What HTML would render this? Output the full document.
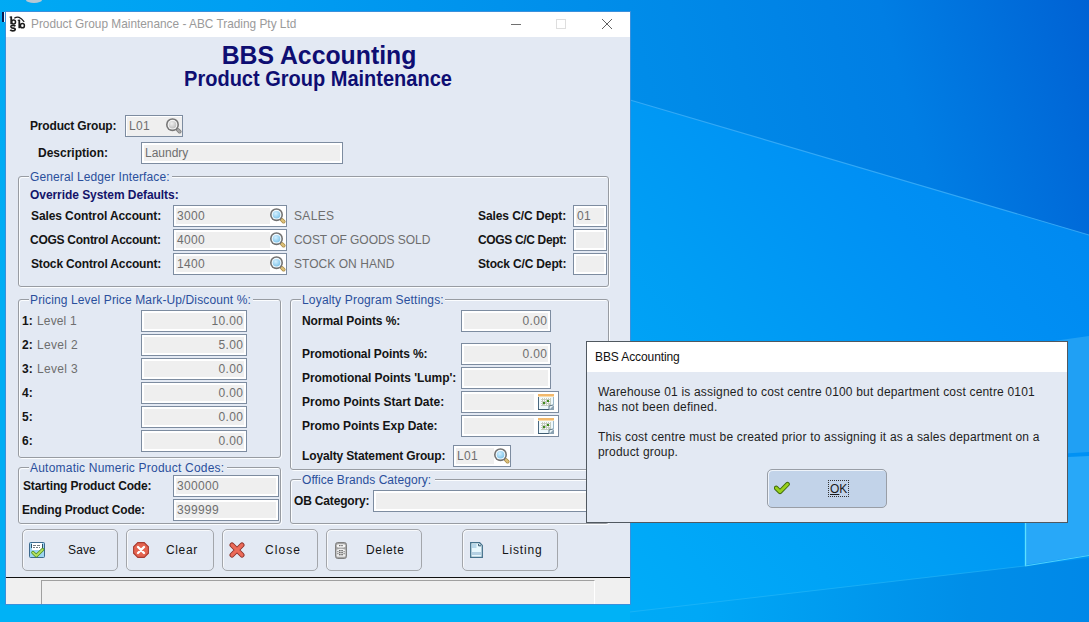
<!DOCTYPE html>
<html><head><meta charset="utf-8">
<style>
*{box-sizing:border-box}
html,body{margin:0;padding:0}
body{width:1089px;height:622px;overflow:hidden;position:relative;font-family:"Liberation Sans",sans-serif;font-size:12px;background:#0b8fe8}
.a{position:absolute}
.t{position:absolute;white-space:nowrap;line-height:14px;height:14px}
.lb{font-weight:bold;color:#141414}
.nv{font-weight:bold;color:#14146a}
.lg{color:#2a4f9c}
.gv{color:#6e6e6e}
.nm{letter-spacing:0.33px}
.fld{position:absolute;border:1px solid #7d8ca0;background:#fff}
.fld i{position:absolute;background:#efefef}
.btn{position:absolute;border:1px solid #a3a6ab;border-radius:5px;box-shadow:inset 1px 1px 0 #f7f9fc}
.bt{color:#141414}
</style></head><body>
<svg width="0" height="0" style="position:absolute">
<defs>
 <radialGradient id="glass" cx="0.4" cy="0.35" r="0.7"><stop offset="0" stop-color="#d4f0ff"/><stop offset="1" stop-color="#7ec4ea"/></radialGradient>
 <radialGradient id="glassg" cx="0.4" cy="0.35" r="0.7"><stop offset="0" stop-color="#f0f0f0"/><stop offset="1" stop-color="#bcbcbc"/></radialGradient>
 <symbol id="mag" viewBox="0 0 16 16">
  <path d="M12 12 L13.6 13.6" stroke="#a88a48" stroke-width="3.8" stroke-linecap="round"/>
  <path d="M12 12 L13.6 13.6" stroke="#dcc078" stroke-width="2.4" stroke-linecap="round"/>
  <circle cx="6.5" cy="6.7" r="6.5" fill="#727272"/>
  <circle cx="6.5" cy="6.7" r="4.9" fill="#f4fbff"/>
  <circle cx="6.5" cy="6.7" r="3.8" fill="url(#glass)"/>
 </symbol>
 <symbol id="magg" viewBox="0 0 16 16">
  <path d="M12 12 L13.6 13.6" stroke="#7c7c7c" stroke-width="3.8" stroke-linecap="round"/>
  <path d="M12 12 L13.6 13.6" stroke="#a8a8a8" stroke-width="2.4" stroke-linecap="round"/>
  <circle cx="6.5" cy="6.7" r="6.5" fill="#767676"/>
  <circle cx="6.5" cy="6.7" r="4.9" fill="#f6f6f6"/>
  <circle cx="6.5" cy="6.7" r="3.8" fill="url(#glassg)"/>
 </symbol>
 <symbol id="cal" viewBox="0 0 16 16">
  <rect x="0" y="0" width="16" height="16" fill="#eef8fc"/>
  <rect x="0" y="0" width="16" height="2" fill="#f2b86c"/>
  <rect x="0" y="2" width="16" height="1" fill="#f8dcae"/>
  <rect x="0" y="3" width="1" height="13" fill="#4a6880"/>
  <rect x="0" y="15" width="11" height="1" fill="#3e5c72"/>
  <rect x="15" y="3" width="1" height="8" fill="#9ab8c8"/>
  <rect x="3" y="4" width="10" height="8" fill="#c4ccc0"/>
  <g fill="#ffffff">
   <rect x="3" y="4" width="1" height="1"/><rect x="5" y="4" width="1" height="1"/><rect x="7" y="4" width="1" height="1"/><rect x="9" y="4" width="1" height="1"/><rect x="11" y="4" width="1" height="1"/>
   <rect x="3" y="6" width="1" height="1"/><rect x="5" y="6" width="1" height="1"/><rect x="7" y="6" width="1" height="1"/><rect x="11" y="6" width="1" height="1"/>
   <rect x="3" y="8" width="1" height="1"/><rect x="9" y="8" width="1" height="1"/><rect x="11" y="8" width="1" height="1"/>
   <rect x="3" y="10" width="1" height="1"/><rect x="7" y="10" width="1" height="1"/><rect x="9" y="10" width="1" height="1"/>
  </g>
  <rect x="5" y="8" width="2" height="2" fill="#3f8c1c"/><rect x="9" y="6" width="2" height="2" fill="#3f8c1c"/>
  <path d="M11 16 L16 11 L16 16 Z" fill="#8aa2b2"/>
  <path d="M11 16 L11 12 L15 11" fill="none" stroke="#5e7888" stroke-width="1"/>
 </symbol>
 <symbol id="save" viewBox="0 0 16 16">
  <rect x="0.5" y="0.5" width="15" height="15" rx="1" fill="#9ed6f2" stroke="#3d6a8e"/>
  <rect x="3" y="1" width="10" height="7" fill="#ffffff"/>
  <rect x="2" y="2" width="1" height="4" fill="#2e4e66"/><rect x="13" y="2" width="1" height="4" fill="#2e4e66"/>
  <g fill="#707a80"><rect x="4" y="3" width="3" height="1"/><rect x="8" y="3" width="3" height="1"/><rect x="4" y="5" width="2" height="1"/><rect x="7" y="5" width="2" height="1"/><rect x="10" y="5" width="1" height="1"/></g>
  <path d="M4 10.6 L7.3 13.8 L13.6 7.6" fill="none" stroke="#4a8c18" stroke-width="3.4" stroke-linejoin="round" stroke-linecap="round"/>
  <path d="M4 10.6 L7.3 13.8 L13.6 7.6" fill="none" stroke="#b4e060" stroke-width="2.0" stroke-linejoin="round" stroke-linecap="round"/>
 </symbol>
 <symbol id="clear" viewBox="0 0 16 16">
  <path d="M4.8 0.6 H11.2 L15.4 4.8 V11.2 L11.2 15.4 H4.8 L0.6 11.2 V4.8 Z" fill="#e46450" stroke="#a83c32" stroke-width="1.1"/>
  <path d="M5 5 L11 11 M11 5 L5 11" stroke="#fff" stroke-width="2.4" stroke-linecap="round"/>
 </symbol>
 <symbol id="close" viewBox="0 0 16 16">
  <path d="M3 3 L13 13 M13 3 L3 13" stroke="#8a3028" stroke-width="5" stroke-linecap="round"/>
  <path d="M3 3 L13 13 M13 3 L3 13" stroke="#ec6a58" stroke-width="3.2" stroke-linecap="round"/>
 </symbol>
 <symbol id="del" viewBox="0 0 12 17">
  <rect x="0.5" y="0.5" width="11" height="16" rx="2.2" fill="#a4a4a4" stroke="#808080"/>
  <rect x="1.6" y="2.2" width="8.8" height="3.2" rx="1.6" fill="#f6f6f6"/>
  <path d="M1.6 7.8 Q6 5.6 10.4 7.8 V13.6 Q10.4 14.8 9.2 14.8 H2.8 Q1.6 14.8 1.6 13.6 Z" fill="#eeeeee"/>
  <g fill="#4a4a4a"><rect x="4.2" y="3" width="1.2" height="1.2"/><rect x="6.4" y="3" width="1.2" height="1.2"/>
  <rect x="4.2" y="8" width="1.3" height="1.3"/><rect x="6.4" y="8" width="1.3" height="1.3"/>
  <rect x="4.2" y="10" width="1.3" height="1.3"/><rect x="6.4" y="10" width="1.3" height="1.3"/>
  <rect x="4.2" y="12" width="1.3" height="1.3"/><rect x="6.4" y="12" width="1.3" height="1.3"/>
  <rect x="2.4" y="9.2" width="1" height="1"/><rect x="8.6" y="9.2" width="1" height="1"/><rect x="2.4" y="11.2" width="1" height="1"/><rect x="8.6" y="11.2" width="1" height="1"/></g>
 </symbol>
 <symbol id="list" viewBox="0 0 13 16">
  <path d="M0.7 0.7 H9.6 L12.3 3.4 V15.3 H0.7 Z" fill="#e8f8fd" stroke="#46728c" stroke-width="1.3"/>
  <rect x="2" y="2" width="4.5" height="4" fill="#b8d8ea"/>
  <rect x="2" y="10" width="9" height="3" fill="#b4d0e2"/>
  <path d="M8.6 2 V3.8 H11" fill="none" stroke="#2e5068" stroke-width="1"/>
 </symbol>
 <symbol id="ok" viewBox="0 0 16 14">
  <path d="M2.2 7 L6 10.8 L13.5 3.2" fill="none" stroke="#3e6a0c" stroke-width="4.6" stroke-linejoin="round" stroke-linecap="round"/>
  <path d="M2.2 7 L6 10.8 L13.5 3.2" fill="none" stroke="#98d01c" stroke-width="2.8" stroke-linejoin="round" stroke-linecap="round"/>
 </symbol>
</defs></svg>

<svg class="a" style="left:0;top:0" width="1089" height="622">
  <defs>
    <linearGradient id="bgA" gradientUnits="userSpaceOnUse" x1="0" y1="300" x2="1089" y2="0">
      <stop offset="0" stop-color="#00aef4"/><stop offset="0.28" stop-color="#009ef2"/><stop offset="0.64" stop-color="#008ae8"/><stop offset="0.82" stop-color="#007ee4"/><stop offset="1" stop-color="#0062d4"/>
    </linearGradient>
    <linearGradient id="bgB" gradientUnits="userSpaceOnUse" x1="630" y1="600" x2="1089" y2="200">
      <stop offset="0" stop-color="#00acf8"/><stop offset="0.12" stop-color="#00a8f8"/><stop offset="0.41" stop-color="#009ef4"/><stop offset="0.74" stop-color="#0090f4"/><stop offset="1" stop-color="#0088f0"/>
    </linearGradient>
    <linearGradient id="bgC" gradientUnits="userSpaceOnUse" x1="630" y1="0" x2="1089" y2="0">
      <stop offset="0" stop-color="#00aaf6"/><stop offset="0.15" stop-color="#00a8f6"/><stop offset="0.74" stop-color="#008ee8"/><stop offset="1" stop-color="#0088e8"/>
    </linearGradient>
  </defs>
  <rect x="0" y="0" width="1089" height="622" fill="url(#bgA)"/>
  <polygon points="630,100 1089,235 1089,622 630,622" fill="url(#bgB)"/>
  <line x1="630" y1="100" x2="1089" y2="235" stroke="#40b0f8" stroke-width="1.1" opacity="0.8"/>
  <rect x="0" y="604" width="630" height="18" fill="#00b2f6"/>
  <polygon points="630,612 1025,566 1089,558 1089,622 630,622" fill="url(#bgC)"/>
  <line x1="630" y1="612" x2="1025" y2="566" stroke="#30bcf8" stroke-width="1" opacity="0.5"/>
  <polygon points="1025,345 1089,336 1089,452 1025,456" fill="#20a0f4"/>
  <polygon points="1025,459 1089,456 1089,555 1025,565" fill="#28a8f8"/>
  <line x1="1025.5" y1="459" x2="1025.5" y2="566" stroke="#5ce0ff" stroke-width="1.3"/>
  <line x1="1025" y1="566" x2="1089" y2="555.5" stroke="#50d0fc" stroke-width="1.2"/>
  <ellipse cx="34" cy="0" rx="8" ry="3" fill="#b8c8d4"/>
</svg>
<div class="a" style="left:2px;top:12px;width:2px;height:10px;background:#0a1a50"></div><div class="a" style="left:4px;top:12px;width:1px;height:10px;background:#e8f4ff"></div>

<div class="a" style="left:5px;top:11px;width:626px;height:594px;background:#3a90dc"></div>
<div class="a" style="left:6px;top:12px;width:624px;height:592px;background:#e3e9f3"></div>
<div class="a" style="left:6px;top:12px;width:624px;height:25px;background:#fff"></div>
<div class="t " style="left:31px;top:17px;color:#9a9a9a;font-size:11.85px">Product Group Maintenance - ABC Trading Pty Ltd</div>
<svg class="a" style="left:6px;top:12px" width="22" height="22" viewBox="6 12 22 22">
 <g fill="none" stroke="#1c1c1c">
  <path d="M11.2 16.6 V24.2" stroke-width="1.8"/>
  <path d="M9.6 17.1 H12" stroke-width="1.1"/>
  <ellipse cx="13.6" cy="22" rx="1.9" ry="2.0" stroke-width="1.5"/>
  <path d="M15.4 26.2 Q14.6 25.3 12.8 25.4 Q10.6 25.6 11 27 Q11.4 28 13 28.1 Q15.3 28.4 15.2 29.6 Q15 30.9 12.8 30.9 Q10.9 30.8 10.3 29.8" stroke-width="1.7"/>
  <path d="M19.3 19.8 V28.2" stroke-width="1.8"/>
  <path d="M17.7 20.3 H20" stroke-width="1.1"/>
  <ellipse cx="22.4" cy="25.7" rx="2.0" ry="2.1" stroke-width="1.5"/>
  <path d="M14.3 18.3 Q19 14.6 24.2 21.8" stroke-width="1.2"/>
 </g>
</svg>
<div class="a" style="left:511px;top:24px;width:10px;height:1px;background:#707070"></div>
<div class="a" style="left:556px;top:19px;width:10px;height:10px;border:1px solid #dedede"></div>
<svg class="a" style="left:601px;top:18px" width="12" height="12"><path d="M1 1L11 11M11 1L1 11" stroke="#606060" stroke-width="1"/></svg>
<div class="t" style="left:7px;width:624px;text-align:center;top:41px;font-size:24.8px;line-height:28px;height:28px;font-weight:bold;color:#0e0e72;transform:scaleY(1.065);transform-origin:50% 5px">BBS Accounting</div>
<div class="t" style="left:6px;width:624px;text-align:center;top:67px;font-size:20px;line-height:22px;height:22px;font-weight:bold;color:#0e0e72;transform:scaleY(1.07);transform-origin:50% 4px">Product Group Maintenance</div>
<div class="t lb" style="left:30px;top:119px;letter-spacing:-0.169px;">Product Group:</div>
<div class="fld" style="left:125px;top:115px;width:58px;height:22px"><i style="left:1px;top:1px;right:0;bottom:0"></i></div>
<svg class="a" style="left:166px;top:118px" width="16" height="16" viewBox="0 0 16 16"><use href="#magg"/></svg>
<div class="t gv nm" style="left:129px;top:119px;">L01</div>
<div class="t lb" style="left:38px;top:146px;letter-spacing:0.0px;">Description:</div>
<div class="fld" style="left:141px;top:142px;width:202px;height:22px;"><i style="left:2px;top:2px;right:2px;bottom:2px"></i></div>
<div class="t gv" style="left:145px;top:146px;">Laundry</div>
<div class="a" style="left:19px;top:177px;width:591px;height:111px;border:1px solid #fbfdff;border-radius:3px"></div>
<div class="a" style="left:18px;top:176px;width:591px;height:111px;border:1px solid #989ca2;border-radius:3px"></div>
<div class="a" style="left:29px;top:174px;width:143px;height:5px;background:#e3e9f3"></div>
<div class="t lg" style="left:30px;top:170px;letter-spacing:0.117px;">General Ledger Interface:</div>
<div class="t nv" style="left:30px;top:188px;letter-spacing:-0.058px;">Override System Defaults:</div>
<div class="t lb" style="left:31px;top:209px;letter-spacing:-0.095px;">Sales Control Account:</div>
<div class="t lb" style="left:30px;top:233px;letter-spacing:-0.265px;">COGS Control Account:</div>
<div class="t lb" style="left:31px;top:257px;letter-spacing:-0.157px;">Stock Control Account:</div>
<div class="fld" style="left:173px;top:205px;width:114px;height:22px;"><i style="left:2px;top:2px;right:16px;bottom:2px"></i></div>
<svg class="a" style="left:270px;top:208px" width="16" height="16" viewBox="0 0 16 16"><use href="#mag"/></svg>
<div class="t gv nm" style="left:177px;top:209px;">3000</div>
<div class="t gv" style="left:294px;top:209px;letter-spacing:0.35px;">SALES</div>
<div class="fld" style="left:173px;top:229px;width:114px;height:22px;"><i style="left:2px;top:2px;right:16px;bottom:2px"></i></div>
<svg class="a" style="left:270px;top:232px" width="16" height="16" viewBox="0 0 16 16"><use href="#mag"/></svg>
<div class="t gv nm" style="left:177px;top:233px;">4000</div>
<div class="t gv" style="left:294px;top:233px;letter-spacing:-0.047px;">COST OF GOODS SOLD</div>
<div class="fld" style="left:173px;top:253px;width:114px;height:22px;"><i style="left:2px;top:2px;right:16px;bottom:2px"></i></div>
<svg class="a" style="left:270px;top:256px" width="16" height="16" viewBox="0 0 16 16"><use href="#mag"/></svg>
<div class="t gv nm" style="left:177px;top:257px;">1400</div>
<div class="t gv" style="left:294px;top:257px;letter-spacing:0.042px;">STOCK ON HAND</div>
<div class="t lb" style="left:478px;top:209px;letter-spacing:-0.079px;">Sales C/C Dept:</div>
<div class="t lb" style="left:478px;top:233px;letter-spacing:-0.346px;">COGS C/C Dept:</div>
<div class="t lb" style="left:478px;top:257px;letter-spacing:-0.164px;">Stock C/C Dept:</div>
<div class="fld" style="left:573px;top:205px;width:34px;height:22px;"><i style="left:2px;top:2px;right:2px;bottom:2px"></i></div>
<div class="fld" style="left:573px;top:229px;width:34px;height:22px;"><i style="left:2px;top:2px;right:2px;bottom:2px"></i></div>
<div class="fld" style="left:573px;top:253px;width:34px;height:22px;"><i style="left:2px;top:2px;right:2px;bottom:2px"></i></div>
<div class="t gv nm" style="left:577px;top:209px;">01</div>
<div class="a" style="left:19px;top:300px;width:263px;height:159px;border:1px solid #fbfdff;border-radius:3px"></div>
<div class="a" style="left:18px;top:299px;width:263px;height:159px;border:1px solid #989ca2;border-radius:3px"></div>
<div class="a" style="left:29px;top:297px;width:224px;height:5px;background:#e3e9f3"></div>
<div class="t lg" style="left:30px;top:293px;letter-spacing:0.126px;">Pricing Level Price Mark-Up/Discount %:</div>
<div class="t lb" style="left:22px;top:314px;">1:</div>
<div class="t gv" style="left:37px;top:314px;letter-spacing:0.367px;letter-spacing:0.15px">Level 1</div>
<div class="fld" style="left:141px;top:310px;width:106px;height:22px;"><i style="left:2px;top:2px;right:2px;bottom:2px"></i></div>
<div class="t gv nm" style="left:141px;width:102.3px;text-align:right;top:314px">10.00</div>
<div class="t lb" style="left:22px;top:338px;">2:</div>
<div class="t gv" style="left:37px;top:338px;letter-spacing:0.33px">Level 2</div>
<div class="fld" style="left:141px;top:334px;width:106px;height:22px;"><i style="left:2px;top:2px;right:2px;bottom:2px"></i></div>
<div class="t gv nm" style="left:141px;width:102.3px;text-align:right;top:338px">5.00</div>
<div class="t lb" style="left:22px;top:362px;">3:</div>
<div class="t gv" style="left:37px;top:362px;letter-spacing:0.33px">Level 3</div>
<div class="fld" style="left:141px;top:358px;width:106px;height:22px;"><i style="left:2px;top:2px;right:2px;bottom:2px"></i></div>
<div class="t gv nm" style="left:141px;width:102.3px;text-align:right;top:362px">0.00</div>
<div class="t lb" style="left:22px;top:386px;">4:</div>
<div class="fld" style="left:141px;top:382px;width:106px;height:22px;"><i style="left:2px;top:2px;right:2px;bottom:2px"></i></div>
<div class="t gv nm" style="left:141px;width:102.3px;text-align:right;top:386px">0.00</div>
<div class="t lb" style="left:22px;top:410px;">5:</div>
<div class="fld" style="left:141px;top:406px;width:106px;height:22px;"><i style="left:2px;top:2px;right:2px;bottom:2px"></i></div>
<div class="t gv nm" style="left:141px;width:102.3px;text-align:right;top:410px">0.00</div>
<div class="t lb" style="left:22px;top:434px;">6:</div>
<div class="fld" style="left:141px;top:430px;width:106px;height:22px;"><i style="left:2px;top:2px;right:2px;bottom:2px"></i></div>
<div class="t gv nm" style="left:141px;width:102.3px;text-align:right;top:434px">0.00</div>
<div class="a" style="left:19px;top:468px;width:263px;height:57px;border:1px solid #fbfdff;border-radius:3px"></div>
<div class="a" style="left:18px;top:467px;width:263px;height:57px;border:1px solid #989ca2;border-radius:3px"></div>
<div class="a" style="left:29px;top:465px;width:198px;height:5px;background:#e3e9f3"></div>
<div class="t lg" style="left:30px;top:461px;letter-spacing:0.216px;">Automatic Numeric Product Codes:</div>
<div class="t lb" style="left:23px;top:479px;letter-spacing:-0.09px;letter-spacing:-0.13px">Starting Product Code:</div>
<div class="t lb" style="left:22px;top:503px;letter-spacing:-0.189px;">Ending Product Code:</div>
<div class="fld" style="left:173px;top:475px;width:106px;height:22px;"><i style="left:2px;top:2px;right:2px;bottom:2px"></i></div>
<div class="fld" style="left:173px;top:499px;width:106px;height:22px;"><i style="left:2px;top:2px;right:2px;bottom:2px"></i></div>
<div class="t gv nm" style="left:177px;top:479px;">300000</div>
<div class="t gv nm" style="left:177px;top:503px;">399999</div>
<div class="a" style="left:291px;top:300px;width:319px;height:171px;border:1px solid #fbfdff;border-radius:3px"></div>
<div class="a" style="left:290px;top:299px;width:319px;height:171px;border:1px solid #989ca2;border-radius:3px"></div>
<div class="a" style="left:301px;top:297px;width:144px;height:5px;background:#e3e9f3"></div>
<div class="t lg" style="left:302px;top:293px;letter-spacing:0.179px;">Loyalty Program Settings:</div>
<div class="t lb" style="left:302px;top:314px;letter-spacing:-0.067px;">Normal Points %:</div>
<div class="t lb" style="left:302px;top:347px;letter-spacing:-0.125px;">Promotional Points %:</div>
<div class="t lb" style="left:302px;top:371px;letter-spacing:-0.06px;">Promotional Points 'Lump':</div>
<div class="t lb" style="left:302px;top:395px;letter-spacing:0.009px;">Promo Points Start Date:</div>
<div class="t lb" style="left:302px;top:419px;letter-spacing:-0.057px;">Promo Points Exp Date:</div>
<div class="t lb" style="left:302px;top:449px;letter-spacing:-0.139px;">Loyalty Statement Group:</div>
<div class="fld" style="left:461px;top:310px;width:90px;height:22px;"><i style="left:2px;top:2px;right:2px;bottom:2px"></i></div>
<div class="fld" style="left:461px;top:343px;width:90px;height:22px;"><i style="left:2px;top:2px;right:2px;bottom:2px"></i></div>
<div class="fld" style="left:461px;top:367px;width:90px;height:22px;"><i style="left:2px;top:2px;right:2px;bottom:2px"></i></div>
<div class="fld" style="left:461px;top:391px;width:98px;height:22px;"><i style="left:2px;top:2px;right:24px;bottom:2px"></i></div>
<div class="fld" style="left:461px;top:415px;width:98px;height:22px;"><i style="left:2px;top:2px;right:24px;bottom:2px"></i></div>
<svg class="a" style="left:538px;top:394px" width="16" height="16" viewBox="0 0 16 16"><use href="#cal"/></svg>
<svg class="a" style="left:538px;top:418px" width="16" height="16" viewBox="0 0 16 16"><use href="#cal"/></svg>
<div class="fld" style="left:453px;top:445px;width:58px;height:22px;"><i style="left:2px;top:2px;right:16px;bottom:2px"></i></div>
<svg class="a" style="left:494px;top:448px" width="16" height="16" viewBox="0 0 16 16"><use href="#mag"/></svg>
<div class="t gv nm" style="left:461px;width:86.3px;text-align:right;top:314px">0.00</div>
<div class="t gv nm" style="left:461px;width:86.3px;text-align:right;top:347px">0.00</div>
<div class="t gv nm" style="left:457px;top:449px;">L01</div>
<div class="a" style="left:291px;top:480px;width:319px;height:45px;border:1px solid #fbfdff;border-radius:3px"></div>
<div class="a" style="left:290px;top:479px;width:319px;height:45px;border:1px solid #989ca2;border-radius:3px"></div>
<div class="a" style="left:301px;top:477px;width:134px;height:5px;background:#e3e9f3"></div>
<div class="t lg" style="left:302px;top:473px;letter-spacing:0.059px;">Office Brands Category:</div>
<div class="t lb" style="left:294px;top:494px;letter-spacing:-0.173px;">OB Category:</div>
<div class="fld" style="left:373px;top:490px;width:240px;height:22px;"><i style="left:2px;top:2px;right:2px;bottom:2px"></i></div>
<div class="btn" style="left:22px;top:529px;width:96px;height:42px"></div>
<svg class="a" style="left:29px;top:542px" width="16" height="16" viewBox="0 0 16 16"><use href="#save"/></svg>
<div class="t bt" style="left:68px;top:543px;letter-spacing:0.133px;">Save</div>
<div class="btn" style="left:126px;top:529px;width:88px;height:42px"></div>
<svg class="a" style="left:133px;top:542px" width="16" height="16" viewBox="0 0 16 16"><use href="#clear"/></svg>
<div class="t bt" style="left:166px;top:543px;letter-spacing:0.625px;">Clear</div>
<div class="btn" style="left:222px;top:529px;width:96px;height:42px"></div>
<svg class="a" style="left:229px;top:542px" width="16" height="16" viewBox="0 0 16 16"><use href="#close"/></svg>
<div class="t bt" style="left:265px;top:543px;letter-spacing:1.05px;">Close</div>
<div class="btn" style="left:326px;top:529px;width:96px;height:42px"></div>
<svg class="a" style="left:335px;top:542px" width="12" height="17" viewBox="0 0 12 17"><use href="#del"/></svg>
<div class="t bt" style="left:366px;top:543px;letter-spacing:0.66px;">Delete</div>
<div class="btn" style="left:462px;top:529px;width:96px;height:42px"></div>
<svg class="a" style="left:470px;top:542px" width="13" height="16" viewBox="0 0 13 16"><use href="#list"/></svg>
<div class="t bt" style="left:502px;top:543px;letter-spacing:0.817px;">Listing</div>
<div class="a" style="left:6px;top:577px;width:624px;height:1px;background:#111"></div>
<div class="a" style="left:6px;top:578px;width:624px;height:26px;background:#f0f0f0"></div>
<div class="a" style="left:41px;top:580px;width:554px;height:24px;border-left:1px solid #a0a0a0;border-top:1px solid #a0a0a0;border-right:1px solid #fff"></div>
<div class="a" style="left:586px;top:341px;width:482px;height:182px;background:#e3e9f3;border:1px solid #505860"></div>
<div class="a" style="left:587px;top:342px;width:480px;height:30px;background:#fff"></div>
<div class="t " style="left:595px;top:350px;color:#111;letter-spacing:-0.1px">BBS Accounting</div>
<div class="t" style="left:598px;top:385px;color:#1e1e1e;letter-spacing:0.19px;line-height:15px;height:auto">Warehouse 01 is assigned to cost centre 0100 but department cost centre 0101<br>has not been defined.<br><br>This cost centre must be created prior to assigning it as a sales department on a<br>product group.</div>
<div class="a" style="left:767px;top:469px;width:120px;height:39px;background:#c2d3e9;border:1px solid #999ea6;border-radius:5px;box-shadow:inset 1px 1px 0 #eef3fa"></div>
<svg class="a" style="left:774px;top:481px" width="16" height="14" viewBox="0 0 16 14"><use href="#ok"/></svg>
<div class="t " style="left:830px;top:482px;color:#1a1a1a"><u>O</u>K</div>
<div class="a" style="left:828px;top:480px;width:21px;height:17px;border:1px dotted #333"></div>
</body></html>
